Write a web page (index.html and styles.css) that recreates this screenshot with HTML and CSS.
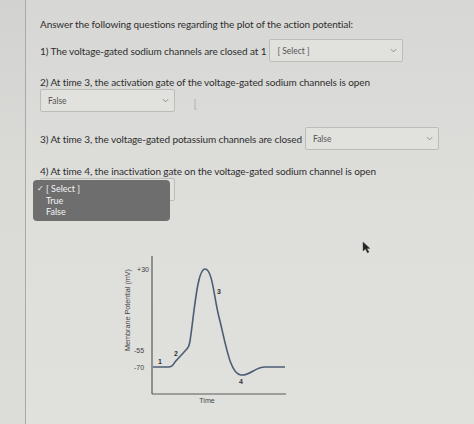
FILE: index.html
```html
<!DOCTYPE html>
<html>
<head>
<meta charset="utf-8">
<link rel="stylesheet" href="styles.css">
</head>
<body>
<div class="page">
  <div class="content">
    <p class="title">Answer the following questions regarding the plot of the action potential:</p>

    <div class="row q1">
      <span class="qtext">1) The voltage-gated sodium channels are closed at 1</span>
      <div class="select"><span class="val">[ Select ]</span><svg class="chev" viewBox="0 0 8 5"><path d="M1 1 L4 4 L7 1" fill="none" stroke="#888" stroke-width="1.1"/></svg></div>
    </div>

    <p class="qtext q2">2) At time 3, the activation gate of the voltage-gated sodium channels is open</p>
    <div class="select narrow s2"><span class="val">False</span><svg class="chev" viewBox="0 0 8 5"><path d="M1 1 L4 4 L7 1" fill="none" stroke="#888" stroke-width="1.1"/></svg></div>

    <div class="row q3">
      <span class="qtext">3) At time 3, the voltage-gated potassium channels are closed</span>
      <div class="select"><span class="val">False</span><svg class="chev" viewBox="0 0 8 5"><path d="M1 1 L4 4 L7 1" fill="none" stroke="#888" stroke-width="1.1"/></svg></div>
    </div>

    <p class="qtext q4">4) At time 4, the inactivation gate on the voltage-gated sodium channel is open</p>
    <div class="dd-wrap">
      <div class="select narrow s4"><span class="val"></span><svg class="chev" viewBox="0 0 8 5"><path d="M1 1 L4 4 L7 1" fill="none" stroke="#888" stroke-width="1.1"/></svg></div>
      <ul class="menu">
        <li class="sel"><span class="check">✓</span>[ Select ]</li>
        <li>True</li>
        <li>False</li>
      </ul>
    </div>

    <svg class="graph" width="190" height="160" viewBox="110 250 190 160">
      <line x1="152" y1="255" x2="152" y2="393" stroke="#5a5a5a" stroke-width="1.2"/>
      <line x1="152" y1="393" x2="286" y2="393" stroke="#5a5a5a" stroke-width="1.2"/>
      <path d="M153 366 L168 366 C172 366 173 364 175 361 L185 350 C188 347 189 346 190 340 C194 315 197 268 205 268 C213 268 214 300 220 320 C227 350 231 373 241 374 C250 375 255 366 265 366 L285 366" fill="none" stroke="#4c5d74" stroke-width="1.6"/>
      <text x="143" y="271" class="tick" text-anchor="middle">+30</text>
      <text x="139" y="352" class="tick" text-anchor="middle">-55</text>
      <text x="139" y="369" class="tick" text-anchor="middle">-70</text>
      <text x="160" y="363" class="lbl" text-anchor="middle">1</text>
      <text x="176" y="355" class="lbl" text-anchor="middle">2</text>
      <text x="219" y="293" class="lbl" text-anchor="middle">3</text>
      <text x="241" y="383" class="lbl" text-anchor="middle">4</text>
      <text x="207" y="402" class="tick" text-anchor="middle">Time</text>
      <text x="0" y="0" class="tick ylab" text-anchor="middle" transform="translate(130 309) rotate(-90)">Membrane Potential (mV)</text>
    </svg>
  </div>
  <svg class="caret" width="6" height="12" viewBox="0 0 6 12"><path d="M2 1 L2 10 M1 11 L4 11" stroke="#aaa" stroke-width="0.8" fill="none"/></svg>
  <svg class="cursor" width="9" height="13" viewBox="0 0 9 13"><path d="M1 1 L1 10 L3.5 8 L5.5 12 L7 11 L5 7.5 L8 7.5 Z" fill="#222" stroke="#555" stroke-width="0.5"/></svg>
</div>
</body>
</html>
```

FILE: styles.css
```css
html, body {
  margin: 0;
  padding: 0;
}
body {
  width: 474px;
  height: 424px;
  overflow: hidden;
  background: linear-gradient(180deg, #d2d2d0 0%, #dadad7 40%, #dcdcd9 100%);
  font-family: Lato, "Noto Sans", sans-serif;
  color: #2e2e2e;
}
.page {
  position: relative;
  height: 424px;
  margin-left: 25px;
  border-left: 1px solid #a9a9a7;
  background: linear-gradient(180deg, #d7d7d5 0%, #dededb 50%, #e0e0dd 100%);
}
.content {
  padding: 17px 0 0 14px;
}
.title,
.qtext {
  margin: 0;
  font-size: 10px;
  letter-spacing: -0.1px;
  line-height: 14px;
  white-space: nowrap;
}
.row {
  display: flex;
  align-items: center;
  gap: 3px;
}
.q1 {
  margin-top: 8px;
}
.q2 {
  margin-top: 13px;
}
.q3 {
  margin-top: 15px;
}
.q4 {
  margin-top: 14px;
}
.select {
  box-sizing: border-box;
  width: 134px;
  height: 23px;
  border: 1px solid #bcbcba;
  border-radius: 2px;
  background: #e1e1de;
  display: flex;
  align-items: center;
  justify-content: space-between;
  padding: 0 5px 0 7px;
}
.narrow {
  width: 135px;
}
.val {
  font-size: 8.5px;
  color: #555;
}
.chev {
  width: 7px;
  height: 5px;
}
.dd-wrap {
  position: relative;
  width: 135px;
}
.menu {
  position: absolute;
  left: -7px;
  top: 2px;
  width: 137px;
  height: 41px;
  box-sizing: border-box;
  margin: 0;
  padding: 3px 0 0 13px;
  list-style: none;
  background: #6e6e6e;
  border-radius: 4px;
  color: #f4f4f4;
  font-size: 9px;
  line-height: 11.5px;
}
.menu li {
  position: relative;
}
.check {
  position: absolute;
  left: -9px;
  font-size: 8px;
}
.graph {
  display: block;
  margin: 50px 0 0 70px;
}
.tick {
  font-family: "Liberation Sans", Arial, sans-serif;
  font-size: 7px;
  fill: #444;
}
.ylab {
  font-size: 7.2px;
}
.lbl {
  font-family: "Liberation Sans", Arial, sans-serif;
  font-size: 7px;
  font-weight: bold;
  fill: #333;
}
.caret {
  position: absolute;
  left: 167px;
  top: 98px;
}
.cursor {
  position: absolute;
  left: 336px;
  top: 241px;
}
```
